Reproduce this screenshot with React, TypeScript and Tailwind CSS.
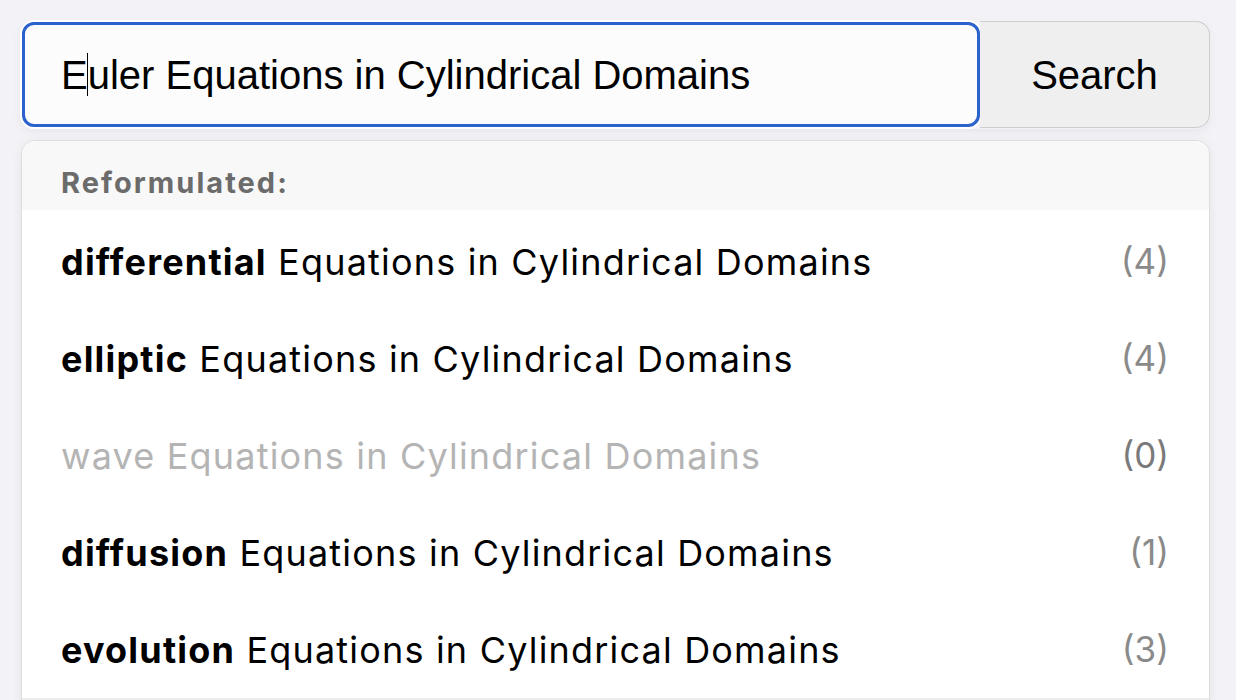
import React from "react";

const rows = [
  { bold: "differential", rest: " Equations in Cylindrical Domains", count: "(4)", disabled: false },
  { bold: "elliptic", rest: " Equations in Cylindrical Domains", count: "(4)", disabled: false },
  { bold: "wave", rest: " Equations in Cylindrical Domains", count: "(0)", disabled: true },
  { bold: "diffusion", rest: " Equations in Cylindrical Domains", count: "(1)", disabled: false },
  { bold: "evolution", rest: " Equations in Cylindrical Domains", count: "(3)", disabled: false },
];

export default function App() {
  return (
    <div className="w-[1236px] h-[700px] overflow-hidden bg-[#f2f2f7] pt-[20px] pl-[20px] pr-[26px]">
      <div className="flex h-[109px] rounded-[14px] shadow-[0_3px_10px_rgba(0,0,0,0.05)]">
        <div className="flex-1 rounded-[14px] border-[2px] border-white">
          <div className="h-full rounded-[12px] border-[3px] border-[#2b62cb] bg-[#fcfcfc] flex items-center pl-[36px] text-[40px] text-black font-['Liberation_Sans',Arial,sans-serif]">
            <span>E</span>
            <span className="inline-block w-[1.5px] h-[43px] bg-black -mx-[0.75px]"></span>
            <span>uler Equations in Cylindrical Domains</span>
          </div>
        </div>
        <div className="w-[230px] my-[1px] -ml-[2px] rounded-r-[14px] border border-l-0 border-[#cdcdcd] bg-[#efefef] flex items-center justify-center text-[40px] text-black font-['Liberation_Sans',Arial,sans-serif]">
          Search
        </div>
      </div>
      <div className="mt-[11px] ml-[1px] rounded-t-[14px] border border-[#dddddd] bg-white overflow-hidden shadow-[0_2px_12px_rgba(0,0,0,0.06)] font-['Inter',sans-serif]">
        <div className="h-[69px] bg-[#f8f8f8] flex items-end pb-[13px] pl-[39px] text-[29px] leading-none font-bold tracking-[0.07em] text-[#6b6b6b]">
          Reformulated:
        </div>
        <div className="pt-[3px]">
          {rows.map((r, i) => (
            <div
              key={i}
              className={`h-[97px] flex items-center justify-between pl-[39px] pr-[40px] text-[36px] tracking-[0.033em] ${r.disabled ? "text-[#b4b4b4]" : "text-black"}`}
            >
              <span>
                <span className={r.disabled ? "" : "font-bold"}>{r.bold}</span>
                {r.rest}
              </span>
              <span className={`text-[35px] tracking-normal ${r.disabled ? "text-[#7a7a7a]" : "text-[#8a8a8a]"}`}>{r.count}</span>
            </div>
          ))}
        </div>
        <div className="border-t-2 border-[#ececec] h-[20px]"></div>
      </div>
    </div>
  );
}
